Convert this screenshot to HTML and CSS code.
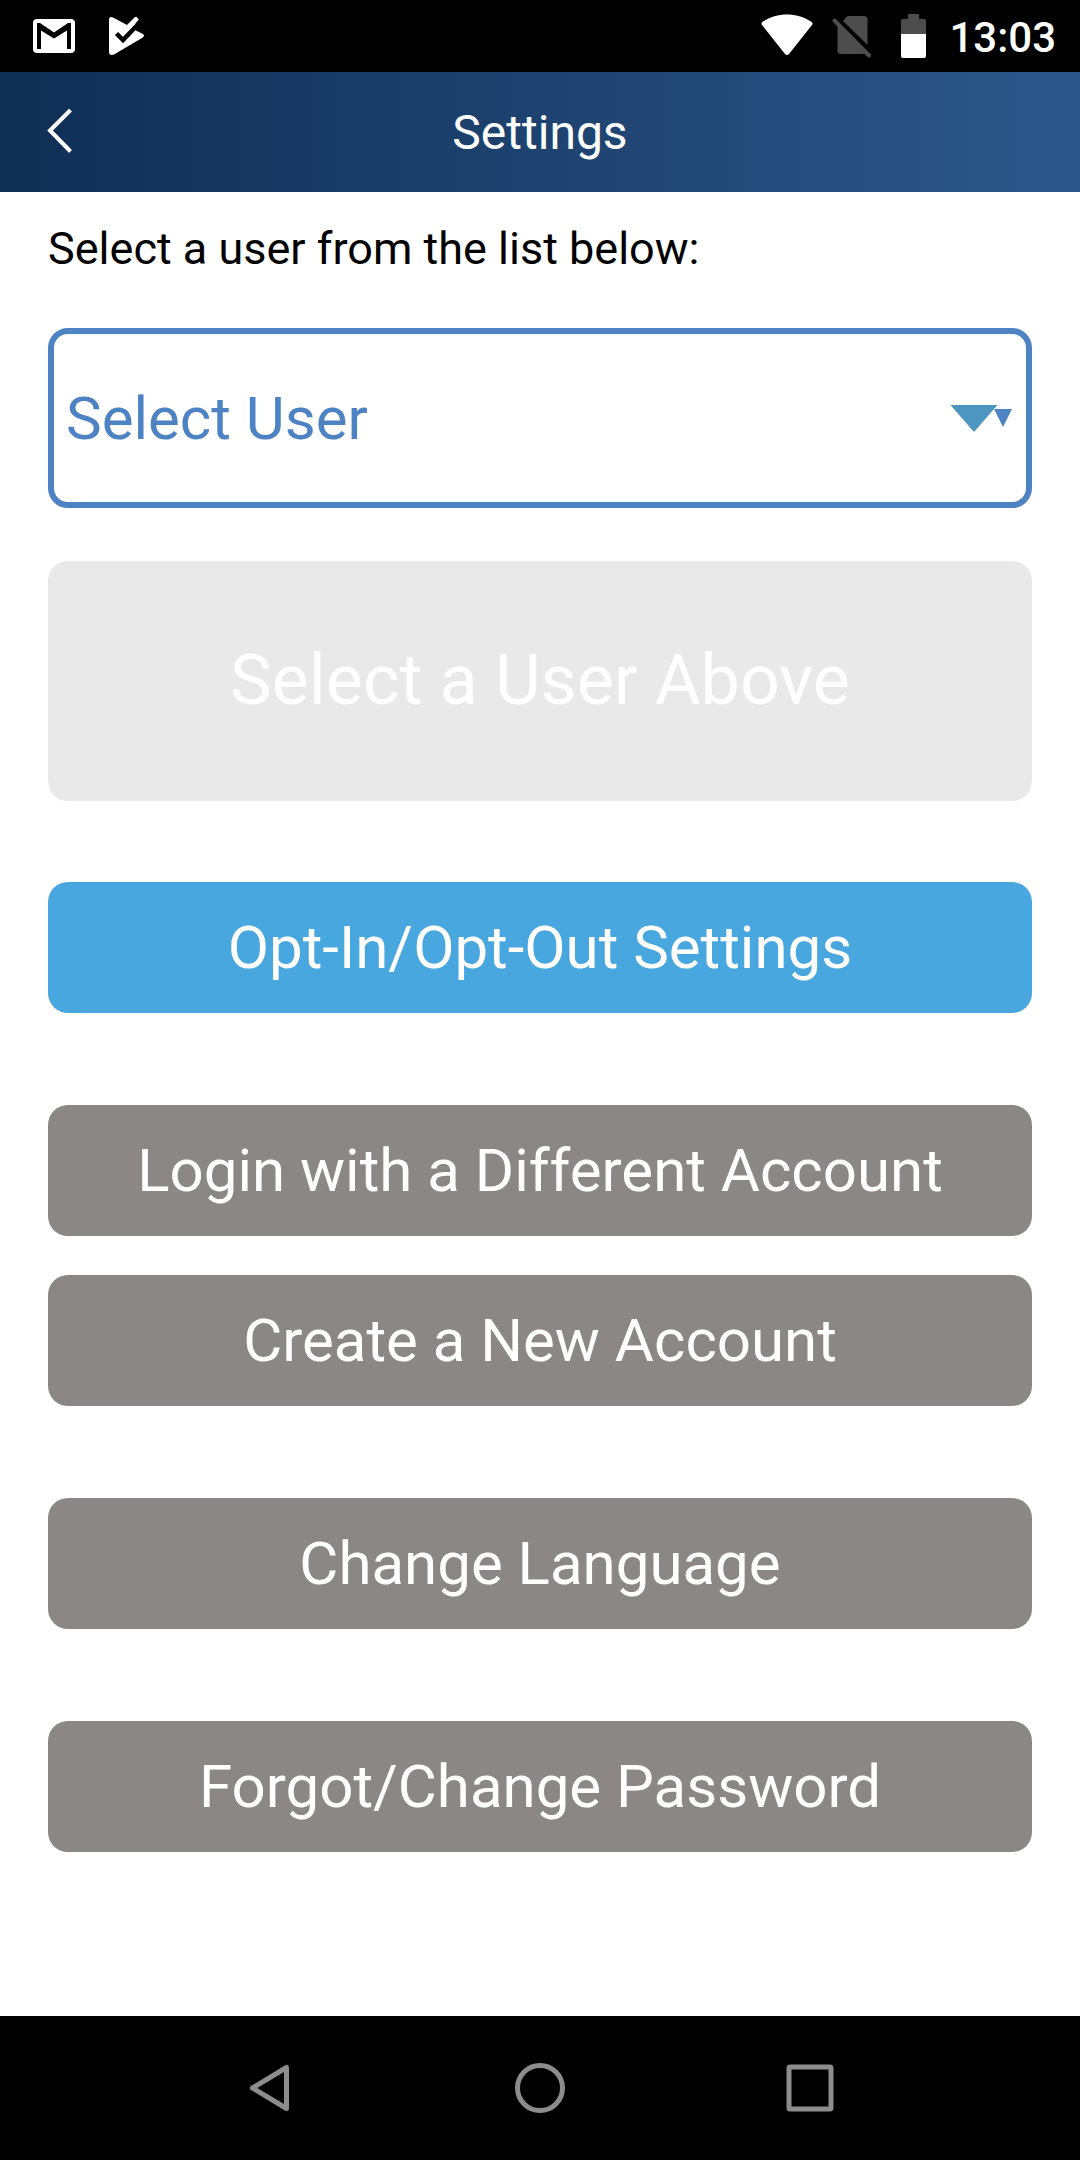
FILE: index.html
```html
<!DOCTYPE html>
<html lang="en">
<head>
  <meta charset="UTF-8" />
  <meta name="viewport" content="width=device-width, initial-scale=1.0"/>
  <title>Settings</title>
  <link rel="stylesheet" href="styles.css">
</head>
<body>

  <div class="status-bar">
    <div class="notifications">
      <svg width="44" height="40" viewBox="0 0 44 40">
        <rect x="1" y="3" width="42" height="34" rx="4" fill="#fff"/>
        <path d="M5 33V7h3l14 9.500L36 7h3v26h-4V14.500L22 22.500 9 14.500V33z" fill="#000"/>
      </svg>
      <svg width="40" height="40" viewBox="0 0 40 40">
        <path d="M2 4q0-4 4-2.500L20 9l8-8 3 3-6 8.500 10 5q4 2 0 4.500L7 38.500Q2 40 2 36z" fill="#fff"/>
        <path d="M9.500 17.500l6.500 6.500 12.500-13" fill="none" stroke="#000" stroke-width="4.500"/>
        <path d="M20 12.500L30.500 2" fill="none" stroke="#fff" stroke-width="4"/>
      </svg>
    </div>
    <div class="system-icons">
      <svg class="wifi" width="52" height="44" viewBox="0 0 52 44">
        <path d="M1 11Q-.5 9 2 7.500C16-2 36-2 50 7.500Q52.500 9 51 11L28 40Q26 42 24 40z" fill="#fff"/>
      </svg>
      <svg class="sim" width="40" height="44" viewBox="0 0 40 44">
        <path d="M11 7l4.500-5H32q3.500 0 3.500 3.500V31zM5.500 10L34 38.500q-1 1.500-3 1.500H9q-3.500 0-3.500-3.500z" fill="#4d4d4d"/>
        <path d="M2.500 6.500l34.500 35" stroke="#4d4d4d" stroke-width="4" stroke-linecap="round"/>
        <path d="M9 7.500l27 27" stroke="#000" stroke-width="3"/>
      </svg>
      <svg class="battery" width="25" height="44" viewBox="0 0 25 44">
        <path d="M7 0h11v5h5q2 0 2 2v13H0V7q0-2 2-2h5z" fill="#4d4d4d"/>
        <path d="M0 20h25v22q0 2-2 2H2q-2 0-2-2z" fill="#fff"/>
      </svg>
      <span class="clock">13:03</span>
    </div>
  </div>

  <div class="header">
    <svg class="back" width="26" height="46" viewBox="0 0 26 46">
      <path d="M23.500 1L3 21.500 23.500 42.500" fill="none" stroke="#fff" stroke-width="4"/>
    </svg>
    <h1>Settings</h1>
  </div>

  <div class="content">
    <p class="label">Select a user from the list below:</p>

    <div class="select-box">
      <span>Select User</span>
      <svg width="62" height="30" viewBox="0 0 62 30">
        <path d="M44 6h18l-9 18z" fill="#4d83c2"/>
        <path d="M.5 2h47L24 29z" fill="#4c96bf"/>
      </svg>
    </div>

    <button class="btn disabled" disabled>Select a User Above</button>
    <button class="btn primary">Opt-In/Opt-Out Settings</button>

    <div class="group">
      <button class="btn">Login with a Different Account</button>
      <button class="btn">Create a New Account</button>
    </div>

    <button class="btn">Change Language</button>
    <button class="btn">Forgot/Change Password</button>
  </div>

  <div class="nav-bar">
    <svg width="52" height="52" viewBox="0 0 52 52">
      <path d="M42.500 5.500v41L8.500 26z"/>
    </svg>
    <svg width="52" height="52" viewBox="0 0 52 52">
      <circle cx="26" cy="26" r="22.500"/>
    </svg>
    <svg width="52" height="52" viewBox="0 0 52 52">
      <rect x="5" y="5" width="42" height="42" rx="1"/>
    </svg>
  </div>

</body>
</html>
```
FILE: styles.css
```css
* {
  box-sizing: border-box;
}

body {
  margin: 0;
  height: 2160px;
  display: flex;
  flex-direction: column;
  font-family: Roboto, "Liberation Sans", sans-serif;
  background: #fff;
}

svg {
  display: block;
  flex: none;
}

.status-bar {
  height: 72px;
  padding: 0 24px 0 32px;
  display: flex;
  justify-content: space-between;
  background: #000;
  color: #fff;
}

.notifications {
  display: flex;
  gap: 31px;
  padding-top: 16px;
}

.system-icons {
  display: flex;
  padding-top: 14px;
}

.sim {
  margin-left: 19px;
}

.battery {
  margin-left: 29px;
}

.clock {
  margin-left: 23px;
  font-size: 42px;
  font-weight: 500;
  line-height: 48px;
}

.header {
  height: 120px;
  display: flex;
  align-items: center;
  padding: 0 47px;
  background: linear-gradient(to right, #0f2e54, #2d578b);
  color: #fff;
}

.header h1 {
  flex: 1;
  margin: 0 26px 0 0;
  text-align: center;
  font-size: 48px;
  font-weight: 400;
}

.content {
  flex: 1;
  padding: 0 48px;
}

.label {
  margin: 0;
  padding-top: 31px;
  height: 136px;
  font-size: 45px;
  line-height: 52px;
  color: #000;
}

.select-box {
  height: 180px;
  display: flex;
  align-items: center;
  justify-content: space-between;
  padding: 0 14px 0 12px;
  border: 6px solid #4d83c2;
  border-radius: 20px;
  font-size: 60px;
  color: #4d83c2;
}

.btn {
  display: block;
  width: 100%;
  height: 131px;
  margin: 92px 0 0;
  padding: 0;
  border: none;
  border-radius: 20px;
  background: #8b8786;
  color: #fff;
  font-family: inherit;
  font-size: 60px;
}

.btn.disabled {
  height: 240px;
  margin-top: 53px;
  padding-bottom: 2px;
  background: #e9e9e9;
  font-size: 70px;
}

.btn.primary {
  margin-top: 81px;
  background: #48a7de;
}

.group .btn + .btn {
  margin-top: 39px;
}

.nav-bar {
  height: 144px;
  display: flex;
  align-items: center;
  justify-content: center;
  gap: 218px;
  background: #000;
}

.nav-bar svg {
  fill: none;
  stroke: #8c8c8c;
  stroke-width: 5;
  stroke-linejoin: round;
}
```
